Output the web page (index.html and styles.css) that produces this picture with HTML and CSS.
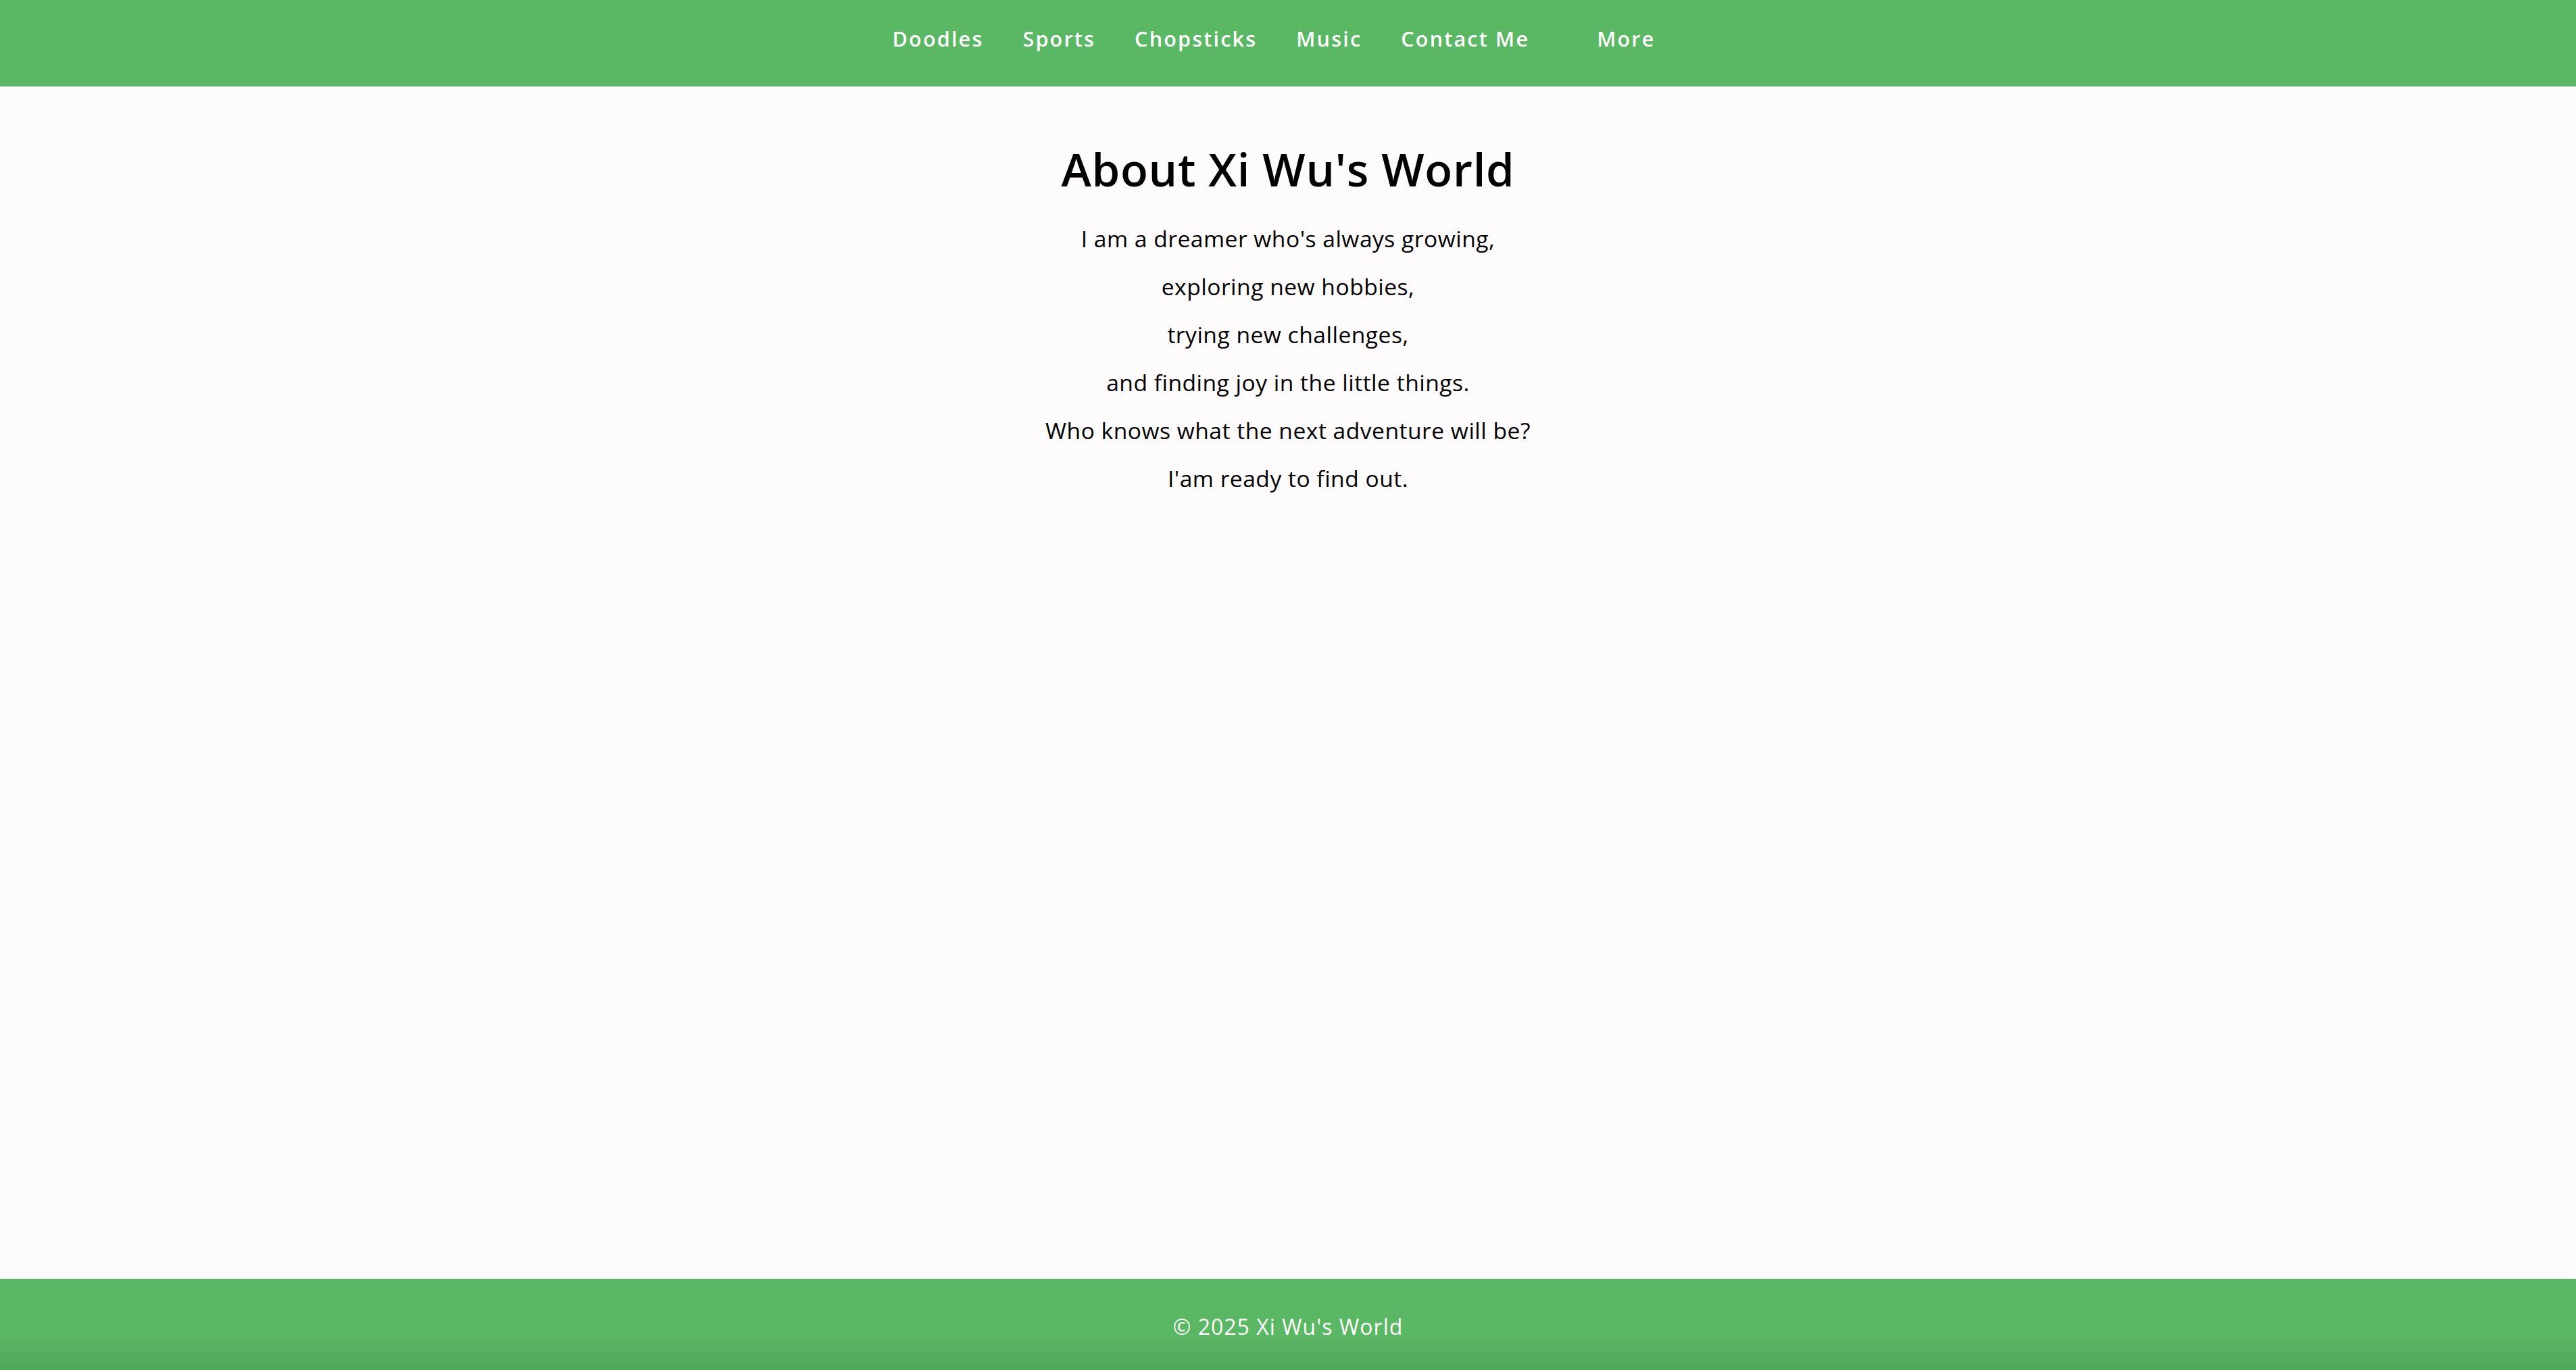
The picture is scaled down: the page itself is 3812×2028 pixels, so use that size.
FILE: index.html
```html
<!DOCTYPE html>
<html lang="en">
<head>
<meta charset="utf-8">
<title>About Xi Wu's World</title>
<link rel="stylesheet" href="styles.css">
</head>
<body>
<header class="site-header">
  <nav class="main-nav">
    <ul class="nav-list">
      <li class="nav-item"><a class="nav-link" href="#">Doodles</a></li>
      <li class="nav-item"><a class="nav-link" href="#">Sports</a></li>
      <li class="nav-item"><a class="nav-link" href="#">Chopsticks</a></li>
      <li class="nav-item"><a class="nav-link" href="#">Music</a></li>
      <li class="nav-item"><a class="nav-link" href="#">Contact Me</a></li>
      <li class="nav-item nav-more"><a class="nav-link" href="#">More</a></li>
    </ul>
  </nav>
</header>
<main class="content">
  <h1 class="title">About Xi Wu's World</h1>
  <p class="line">I am a dreamer who's always growing,</p>
  <p class="line">exploring new hobbies,</p>
  <p class="line">trying new challenges,</p>
  <p class="line">and finding joy in the little things.</p>
  <p class="line">Who knows what the next adventure will be?</p>
  <p class="line">I'am ready to find out.</p>
</main>
<footer class="site-footer">
  <p class="copy">© 2025 Xi Wu's World</p>
</footer>
</body>
</html>
```
FILE: styles.css
```css
html, body {
  margin: 0;
  padding: 0;
}
body {
  background: #fdfbfc;
  font-family: "Open Sans", "Liberation Sans", sans-serif;
  color: #000;
  display: flex;
  flex-direction: column;
  height: 100vh;
  overflow: hidden;
}
.site-header {
  background: #5ab763;
  height: 128px;
  box-sizing: border-box;
  padding-bottom: 14px;
  flex: none;
  display: flex;
  align-items: center;
  justify-content: center;
}
.nav-list {
  list-style: none;
  margin: 0;
  padding: 0;
  display: flex;
  gap: 58px;
}
.nav-link {
  color: #fff;
  text-decoration: none;
  font-size: 30.5px;
  font-weight: 600;
  letter-spacing: 2.2px;
  line-height: 40px;
  display: block;
}
.nav-more {
  padding: 0 42px;
}
.content {
  flex: 1;
  text-align: center;
  padding-top: 82px;
}
.title {
  margin: 0 0 28px;
  font-size: 67px;
  font-weight: 600;
  letter-spacing: 0.75px;
  line-height: 80px;
}
.line {
  margin: 0;
  font-size: 33.6px;
  letter-spacing: 0.5px;
  line-height: 71px;
}
.site-footer {
  flex: none;
  height: 135px;
  background: linear-gradient(to bottom, #5ab763 0%, #5ab763 62%, #50a65a 100%);
  text-align: center;
}
.copy {
  margin: 0;
  padding-top: 51px;
  color: #fff;
  font-size: 32px;
  letter-spacing: 1px;
  line-height: 40px;
}
```
